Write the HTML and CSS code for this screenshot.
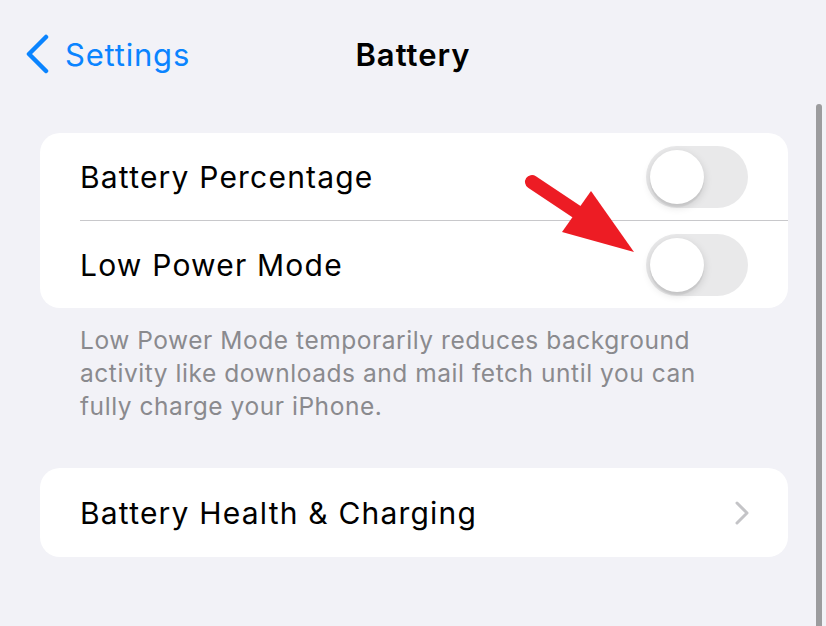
FILE: index.html
```html
<!DOCTYPE html>
<html lang="en">
<head>
    <meta charset="UTF-8">
    <meta name="viewport" content="width=device-width, initial-scale=1.0">
    <title>Battery</title>
    <link rel="stylesheet" href="styles.css">
</head>
<body>

<div class="nav">
    <a class="back" href="#">
        <svg class="back-icon" width="26" height="40" viewBox="0 0 26 40">
            <polyline points="21,3 4,20 21,37" />
        </svg>
        <span>Settings</span>
    </a>
    <h1 class="title">Battery</h1>
    <div></div>
</div>

<div class="content">
    <div class="group">
        <div class="row">
            <span class="label">Battery Percentage</span>
            <span class="toggle"><span class="knob"></span></span>
        </div>
        <div class="row">
            <span class="label">Low Power Mode</span>
            <span class="toggle"><span class="knob"></span></span>
        </div>
    </div>
    <p class="footnote">Low Power Mode temporarily reduces background activity like downloads and mail fetch until you can fully charge your iPhone.</p>

    <div class="group">
        <div class="row row-link">
            <span class="label">Battery Health &amp; Charging</span>
            <svg class="chevron" width="16" height="26" viewBox="0 0 16 26">
                <polyline points="3,3 13,13 3,23" />
            </svg>
        </div>
    </div>
</div>

<!-- Scroll indicator -->
<div class="scroll-indicator"></div>

<!-- Red annotation arrow -->
<svg class="annotation" width="130" height="100" viewBox="515 165 130 100">
    <line x1="532" y1="182" x2="580" y2="214" />
    <polygon points="591,191 562,232 634,252" />
</svg>

</body>
</html>
```

FILE: styles.css
```css
body {
    margin: 0;
    background-color: #f2f2f7;
    font-family: Inter, "Noto Sans", sans-serif;
    color: #000;
    width: 826px;
    height: 626px;
    overflow: hidden;
    position: relative;
}

.nav {
    height: 108px;
    display: grid;
    grid-template-columns: 1fr auto 1fr;
    align-items: center;
}

.back {
    display: flex;
    align-items: center;
    gap: 14px;
    padding-left: 25px;
    color: #0a84ff;
    text-decoration: none;
    font-size: 31px;
    letter-spacing: 0.8px;
}

.back-icon polyline {
    fill: none;
    stroke: #0a84ff;
    stroke-width: 4.5;
    stroke-linecap: round;
    stroke-linejoin: round;
}

.title {
    margin: 0;
    font-size: 31px;
    font-weight: 600;
    letter-spacing: 1px;
}

.content {
    padding: 25px 38px 0 40px;
}

.group {
    background-color: #fff;
    border-radius: 20px;
}

.row {
    height: 87px;
    margin-left: 40px;
    padding-right: 40px;
    display: flex;
    align-items: center;
    justify-content: space-between;
}

.row + .row {
    border-top: 1px solid #c8c8cb;
}

.row-link {
    height: 89px;
    padding-right: 38px;
}

.label {
    font-size: 30px;
    letter-spacing: 1.2px;
}

.toggle {
    width: 102px;
    height: 62px;
    border-radius: 31px;
    background-color: #e9e9ea;
    position: relative;
}

.knob {
    position: absolute;
    top: 4px;
    left: 4px;
    width: 54px;
    height: 54px;
    border-radius: 50%;
    background-color: #fff;
    box-shadow: 0 3px 8px rgba(0, 0, 0, 0.15), 0 3px 1px rgba(0, 0, 0, 0.06);
}

.footnote {
    margin: 16px 0 45px;
    padding: 0 40px;
    font-size: 24.5px;
    letter-spacing: 0.55px;
    line-height: 33px;
    color: #8a8a8e;
}

.chevron polyline {
    fill: none;
    stroke: #c4c4c7;
    stroke-width: 3;
    stroke-linecap: round;
    stroke-linejoin: round;
}

.scroll-indicator {
    position: absolute;
    left: 816px;
    top: 104px;
    width: 6px;
    height: 540px;
    border-radius: 3px;
    background-color: #9c9c9e;
}

.annotation {
    position: absolute;
    left: 515px;
    top: 165px;
}

.annotation line {
    stroke: #ed1c24;
    stroke-width: 14;
    stroke-linecap: round;
}

.annotation polygon {
    fill: #ed1c24;
}
```
